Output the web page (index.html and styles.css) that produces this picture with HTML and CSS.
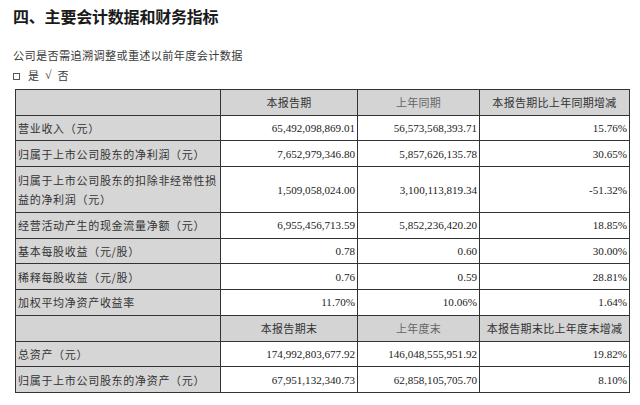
FILE: index.html
```html
<!DOCTYPE html>
<html lang="zh-CN">
<head>
<meta charset="utf-8">
<title>主要会计数据和财务指标</title>
<link rel="stylesheet" href="styles.css">
</head>
<body>
<div class="page">
  <h1 class="title">四、主要会计数据和财务指标</h1>
  <p class="question">公司是否需追溯调整或重述以前年度会计数据</p>
  <p class="options"><span class="box"></span><span>是</span><span class="tick">√</span><span>否</span></p>
  <table class="fin">
    <colgroup>
      <col class="c1"><col class="c2"><col class="c3"><col class="c4">
    </colgroup>
    <tr class="head">
      <td class="lab"></td>
      <td class="hc">本报告期</td>
      <td class="hc light">上年同期</td>
      <td class="hc">本报告期比上年同期增减</td>
    </tr>
    <tr>
      <td class="lab">营业收入（元）</td>
      <td class="num">65,492,098,869.01</td>
      <td class="num">56,573,568,393.71</td>
      <td class="num">15.76%</td>
    </tr>
    <tr>
      <td class="lab">归属于上市公司股东的净利润（元）</td>
      <td class="num">7,652,979,346.80</td>
      <td class="num">5,857,626,135.78</td>
      <td class="num">30.65%</td>
    </tr>
    <tr class="tall">
      <td class="lab two">归属于上市公司股东的扣除非经常性损<br>益的净利润（元）</td>
      <td class="num">1,509,058,024.00</td>
      <td class="num">3,100,113,819.34</td>
      <td class="num">-51.32%</td>
    </tr>
    <tr>
      <td class="lab">经营活动产生的现金流量净额（元）</td>
      <td class="num">6,955,456,713.59</td>
      <td class="num">5,852,236,420.20</td>
      <td class="num">18.85%</td>
    </tr>
    <tr>
      <td class="lab">基本每股收益（元/股）</td>
      <td class="num">0.78</td>
      <td class="num">0.60</td>
      <td class="num">30.00%</td>
    </tr>
    <tr>
      <td class="lab">稀释每股收益（元/股）</td>
      <td class="num">0.76</td>
      <td class="num">0.59</td>
      <td class="num">28.81%</td>
    </tr>
    <tr>
      <td class="lab">加权平均净资产收益率</td>
      <td class="num">11.70%</td>
      <td class="num">10.06%</td>
      <td class="num">1.64%</td>
    </tr>
    <tr class="head">
      <td class="lab"></td>
      <td class="hc">本报告期末</td>
      <td class="hc light">上年度末</td>
      <td class="hc">本报告期末比上年度末增减</td>
    </tr>
    <tr>
      <td class="lab">总资产（元）</td>
      <td class="num">174,992,803,677.92</td>
      <td class="num">146,048,555,951.92</td>
      <td class="num">19.82%</td>
    </tr>
    <tr>
      <td class="lab">归属于上市公司股东的净资产（元）</td>
      <td class="num">67,951,132,340.73</td>
      <td class="num">62,858,105,705.70</td>
      <td class="num">8.10%</td>
    </tr>
  </table>
</div>
</body>
</html>
```

FILE: styles.css
```css
html, body {
  margin: 0;
  padding: 0;
  background: #ffffff;
}
body {
  font-family: "Noto Sans CJK SC", "Noto Sans", sans-serif;
  color: #333333;
}
.page {
  padding: 0 11px 0 13px;
}
.title {
  margin: 6px 0 0 0;
  font-size: 16px;
  line-height: 20px;
  font-weight: 700;
  color: #1a1a1a;
  letter-spacing: -0.2px;
}
.question {
  margin: 21px 0 0 0;
  font-size: 11.2px;
  line-height: 16px;
  letter-spacing: 0.3px;
  color: #3a3a3a;
}
.options {
  margin: 4px 0 0 0;
  font-size: 11px;
  line-height: 16px;
  display: flex;
  align-items: center;
  gap: 6px;
  color: #3a3a3a;
}
.options .box {
  width: 5px;
  height: 5px;
  border: 1px solid #555555;
  margin-right: 2px;
  margin-top: 2px;
}
.options .tick {
  font-family: "Liberation Serif", serif;
  font-size: 12px;
}
.fin {
  margin: 6px 0 0 2px;
  border-collapse: collapse;
  table-layout: fixed;
  width: 614px;
  border: 1.5px solid #333333;
}
.c1 { width: 205px; }
.c2 { width: 137px; }
.c3 { width: 122px; }
.c4 { width: 150px; }
.fin td {
  border: 1px solid #333333;
  height: 24.7px;
  padding: 0 2px;
  vertical-align: middle;
}
.fin tr.tall td {
  height: 45px;
}
.fin td.lab {
  background: #d6d6d6;
  font-size: 11px;
  letter-spacing: 0.7px;
  color: #333333;
  text-align: left;
  white-space: nowrap;
}
.fin td.two {
  line-height: 19px;
}
.fin tr.head td {
  background: #d4d4d4;
}
.fin td.hc {
  font-size: 11px;
  letter-spacing: 0.3px;
  text-align: center;
  color: #333333;
  white-space: nowrap;
}
.fin td.hc.light {
  color: #666666;
}
.fin td.num {
  font-family: "Liberation Serif", "Times New Roman", serif;
  font-size: 11.1px;
  text-align: right;
  color: #1a1a1a;
  white-space: nowrap;
}
```
